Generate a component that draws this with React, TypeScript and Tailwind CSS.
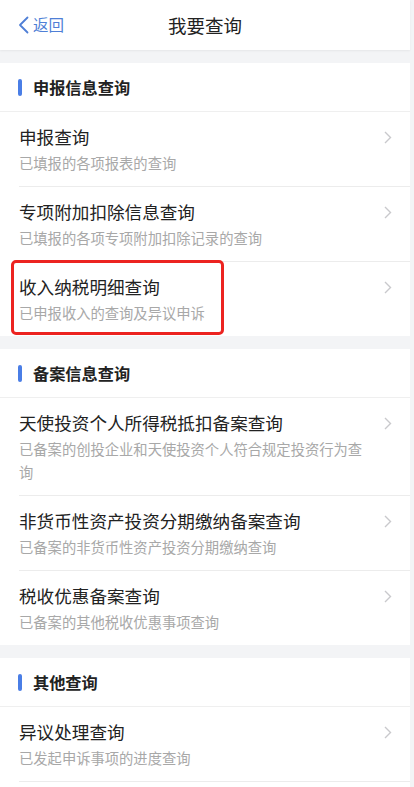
import React from "react";

type Item = { title: string; sub: string; highlight?: boolean };
type Section = { name: string; items: Item[]; more?: boolean };

const sections: Section[] = [
  {
    name: "申报信息查询",
    items: [
      { title: "申报查询", sub: "已填报的各项报表的查询" },
      { title: "专项附加扣除信息查询", sub: "已填报的各项专项附加扣除记录的查询" },
      { title: "收入纳税明细查询", sub: "已申报收入的查询及异议申诉", highlight: true },
    ],
  },
  {
    name: "备案信息查询",
    items: [
      { title: "天使投资个人所得税抵扣备案查询", sub: "已备案的创投企业和天使投资个人符合规定投资行为查询" },
      { title: "非货币性资产投资分期缴纳备案查询", sub: "已备案的非货币性资产投资分期缴纳查询" },
      { title: "税收优惠备案查询", sub: "已备案的其他税收优惠事项查询" },
    ],
  },
  {
    name: "其他查询",
    items: [{ title: "异议处理查询", sub: "已发起申诉事项的进度查询" }],
    more: true,
  },
];

function Chevron() {
  return (
    <svg width="8" height="13" viewBox="0 0 8 13" className="shrink-0 mt-[6px]">
      <path d="M1 1 L6.5 6.5 L1 12" fill="none" stroke="#c9c9cc" strokeWidth="1.4" />
    </svg>
  );
}

export default function App() {
  const font = { fontFamily: '"Noto Sans CJK SC", "Noto Sans", sans-serif' };
  return (
    <div className="w-[414px] h-[787px] overflow-hidden bg-[#f3f4f6]" style={font}>
      <div className="w-[410px]">
        <div className="relative h-[50px] bg-white flex items-center justify-center shadow-[0_1px_2px_rgba(0,0,0,0.06)]">
          <div className="absolute left-[18px] top-0 h-[50px] flex items-center gap-[4px] text-[#4f7fd6]">
            <svg width="11" height="18" viewBox="0 0 11 18">
              <path d="M9.5 1.5 L2 9 L9.5 16.5" fill="none" stroke="#4f7fd6" strokeWidth="1.8" strokeLinecap="round" strokeLinejoin="round" />
            </svg>
            <span className="text-[15.5px] leading-none">返回</span>
          </div>
          <span className="text-[18.5px] text-[#222] leading-none">我要查询</span>
        </div>

        {sections.map((s) => (
          <div key={s.name} className="mt-[13px] bg-white">
            <div className="h-[49px] flex items-center pl-[18px] border-b border-[#efefef]">
              <div className="w-[4px] h-[17px] rounded-full bg-[#4a7ee6]" />
              <span className="ml-[11px] text-[16.2px] font-bold text-[#222] leading-none">{s.name}</span>
            </div>
            {s.items.map((it, i) => (
              <div key={it.title} className="relative pl-[19px]">
                <div
                  className={`flex items-start pr-[18px] pt-[13px] pb-[12px] ${
                    i < s.items.length - 1 || s.more ? "border-b border-[#ececec]" : ""
                  }`}
                >
                  <div className="flex-1 min-w-0 pr-[16px]">
                    <div className="text-[17.6px] leading-[24px] text-[#222]">{it.title}</div>
                    <div className="mt-[2px] text-[14.3px] leading-[23px] text-[#a8a8a8] max-w-[352px]">{it.sub}</div>
                  </div>
                  <Chevron />
                </div>
                {it.highlight && (
                  <div className="absolute left-[11px] top-[-2px] w-[213px] h-[75px] border-[3px] border-[#ec2320] rounded-[5px]" />
                )}
              </div>
            ))}
            {s.more && <div className="h-[60px]" />}
          </div>
        ))}
      </div>
    </div>
  );
}
